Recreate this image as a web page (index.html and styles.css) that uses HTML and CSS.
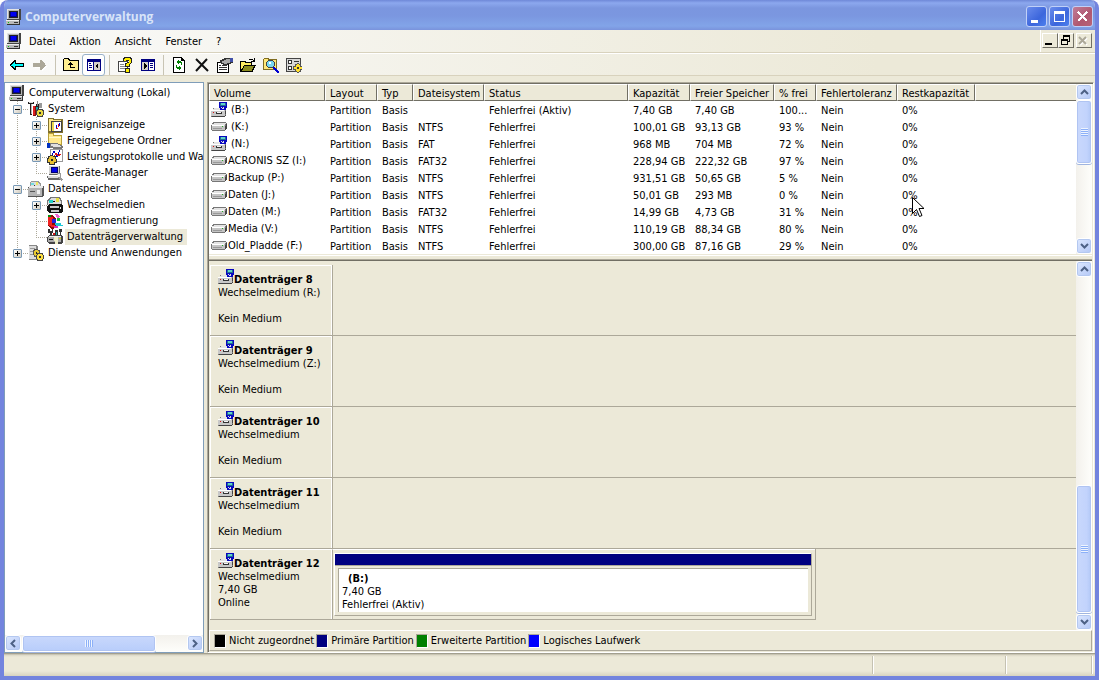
FILE: index.html
```html
<!DOCTYPE html>
<html lang="de">
<head>
<meta charset="utf-8">
<title>Computerverwaltung</title>
<link rel="stylesheet" href="styles.css">
</head>
<body>
<svg class="sprite" aria-hidden="true">
  <symbol id="computer" viewBox="0 0 16 16"><path d="M1 0h13l1 1v10H1z" fill="#444"/><path d="M1 0h12v10H1z" fill="#b4b4b4"/><path d="M1 0h12v1H1zM1 0h1v10H1z" fill="#e4e4e4"/><path d="M3 2h9v7H3z" fill="#222"/><path d="M4 3h7v5H4z" fill="#000090"/><path d="M5 3h5v4H5z" fill="#0000f0"/><path d="M0 11h14v5H1l-1-1z" fill="#333"/><path d="M0 11h13v4H0z" fill="#b8b8b8"/><path d="M0 11h13v1H0z" fill="#eee"/><path d="M8 13h4v1H8z" fill="#333"/><path d="M2 13h1v1H2z" fill="#0c0"/></symbol>
  <symbol id="tools" viewBox="0 0 16 16"><path d="M0 1h6v2H4v11H2V3H0z" fill="#222"/><path d="M1 1h4v1H1z" fill="#ddd"/><path d="M3 3h1v10H3z" fill="#bbb"/><path d="M5 5h3v10H5z" fill="#801010"/><path d="M5 5h2v9H5z" fill="#e02020"/><path d="M8 3h3v11H8z" fill="#222"/><path d="M9 0h1v5H9z" fill="#888"/><path d="M8 6h2v7H8z" fill="#18a0a0"/><path d="M11 2h3v5h-3z" fill="#999"/><path d="M9 8h6v1h1v5h-1v2H9v-2H8V9h1z" fill="#444"/><path d="M10 9h4v1h1v4h-1v1h-4v-1H9v-4h1z" fill="#e8d840"/><path d="M11 11h2v2h-2z" fill="#333"/></symbol>
  <symbol id="events" viewBox="0 0 16 16"><path d="M1 1h6v1h9v14H1z" fill="#80702c"/><path d="M2 2h4v1h8v11H2z" fill="#ffe98c"/><path d="M4 4h11v11H4z" fill="#444"/><path d="M5 5h9v9H5z" fill="#fff"/><path d="M5 5h2v9H5z" fill="#edd94e"/><path d="M9 8h1v3H9zM12 6h1v3h-1z" fill="#0000d0"/><path d="M11 7h1v3h-1zM9 11h2v1H9z" fill="#e01010"/></symbol>
  <symbol id="shared" viewBox="0 0 16 16"><path d="M1 0h6v2h8v10H1z" fill="#b8a038"/><path d="M2 1h4v2h8v8H2z" fill="#ffe98c"/><path d="M2 4h12v1H2z" fill="#fff8c8"/><path d="M0 10h3v5H0z" fill="#0030c0"/><path d="M3 10h7l6 3v2l-3 1H8l-5-1z" fill="#777"/><path d="M4 11h6l4 2v1H7l-3-1z" fill="#e0e0e0"/></symbol>
  <symbol id="perf" viewBox="0 0 16 16"><path d="M3 0h13v13H3z" fill="#999"/><path d="M4 1h11v11H4z" fill="#fff"/><path d="M5 6l2-4 3 6 3-7" stroke="#0000c0" fill="none"/><path d="M6 10l3-6 2 3 3-2" stroke="#e01010" fill="none"/><path d="M1 7h2V6h3v1h3v3h1v4H8v2H2v-2H0V9h1z" fill="#333"/><path d="M3 7h3v1h2v2h1v3H7v2H3v-2H1v-3h1V8h1z" fill="#e8c030"/><path d="M4 10h2v2H4z" fill="#222"/></symbol>
  <symbol id="device" viewBox="0 0 16 16"><path d="M2 1h11v9H2z" fill="#666"/><path d="M2 1h10v8H2z" fill="#d0d0d0"/><path d="M4 2h7v6H4z" fill="#000070"/><path d="M5 3h5v4H5z" fill="#0000e8"/><path d="M0 11h13v1l2 3H1z" fill="#666"/><path d="M1 11h11v2H1z" fill="#ddd"/><path d="M10 8h4v4l2 3-2 1-3-4z" fill="#999"/><path d="M11 9h2v3h-2z" fill="#eee"/></symbol>
  <symbol id="storage" viewBox="0 0 16 16"><path d="M3 0h7l3 3v4H2V2z" fill="#999"/><path d="M3 1h6l3 3v3H3z" fill="#ddd"/><path d="M3 2h3v2H3z" fill="#70dce0"/><path d="M8 1h2v3H8z" fill="#f0e860"/><path d="M6 4h1v1H6z" fill="#333"/><path d="M1 5h14l1 1v8l-2 2H0V6z" fill="#555"/><path d="M0 7h14v8H0z" fill="#b4b4b4"/><path d="M1 5h14v2H1z" fill="#e8e8e8"/><path d="M2 10h5v1H2z" fill="#555"/><path d="M9 9h3v4H9z" fill="#eee"/></symbol>
  <symbol id="removable" viewBox="0 0 16 16"><path d="M3 0h10l2 4v4H0V3z" fill="#777"/><path d="M4 1h8l2 4v3H1V4z" fill="#ddd"/><path d="M2 3h4v3H2z" fill="#20d0c8"/><path d="M9 1h3v4H9z" fill="#e8e040"/><path d="M6 4h2v1H6z" fill="#111"/><path d="M2 7h12l2 2v5l-2 2H2l-2-2V9z" fill="#111"/><path d="M3 9h9v2H3zM4 13h8v2H4z" fill="#c8c8c8"/><path d="M13 10h1v2h-1z" fill="#eee"/></symbol>
  <symbol id="defrag" viewBox="0 0 16 16"><path d="M1 4l4-2 4 3v10l-4 1-4-3z" fill="#8c0808"/><path d="M1 4h5v2H5v6h3v2H5l-4-2z" fill="#f02020"/><path d="M1 2h3v2H1z" fill="#0a8a0a"/><path d="M5 6h4v4H5z" fill="#2020d8"/><path d="M8 1h3l2 3-3 1z" fill="#f060d0"/><path d="M10 5h3v3h-3z" fill="#18c030"/><path d="M8 10h6v2h2v1h-7z" fill="#20c8d8"/><path d="M7 13h4v2H7z" fill="#d030c0"/></symbol>
  <symbol id="diskmgmt" viewBox="0 0 16 16"><path d="M1 0h2v2h2V0h1v4H5v4H3V4H1zM8 1h3v7H8zM12 0h3v3h-1v5h-1V3h-1z" fill="#333"/><path d="M9 3h1v5H9z" fill="#20b0b0"/><path d="M6 4h2v4H6z" fill="#d01818"/><path d="M0 8l2-2h12l2 2v5l-2 2H2l-2-2z" fill="#444"/><path d="M1 8h13v5H1z" fill="#aaa"/><path d="M2 7h12v1H2z" fill="#eee"/><path d="M2 10h4v1H2z" fill="#111"/><path d="M7 8h4v7H8z" fill="#eeeec8"/><path d="M12 9h2v1h-2z" fill="#dd0"/></symbol>
  <symbol id="services" viewBox="0 0 16 16"><path d="M1 0h7l2 2v13H1z" fill="#888"/><path d="M1 1h7v13H1z" fill="#dcdcdc"/><path d="M2 3h5v1H2zM2 6h5v1H2zM2 9h5v1H2z" fill="#999"/><path d="M6 4h4v1h2v5h-2v2H6v-2H5V5h1z" fill="#555"/><path d="M7 5h3v1h1v4h-1v1H7v-1H6V6h1z" fill="#e8c830"/><path d="M8 7h1v2H8z" fill="#222"/><path d="M9 8h6v2h1v4h-1v2H9v-2H8v-4h1z" fill="#444"/><path d="M10 9h4v1h1v4h-1v1h-4v-1H9v-4h1z" fill="#ffe040"/><path d="M11 11h2v2h-2z" fill="#333"/></symbol>
  <symbol id="drive" viewBox="0 0 16 10"><path d="M2 0h13v1h1v6h-1v1h-1v1H1V8H0V3h1V1h1z" fill="#777"/><path d="M3 1h12v1h-1v1H1V2h2z" fill="#e4e4e4"/><path d="M1 3h13v5H1z" fill="#c4c4c4"/><path d="M1 3h12v1H1z" fill="#fff"/><path d="M2 6h9v1H2z" fill="#999"/><path d="M11 4h1v1h-1z" fill="#2a2"/><path d="M15 2h1v5h-1v1h-1V4h1z" fill="#444"/></symbol>
  <symbol id="stick" viewBox="0 0 16 15"><path d="M2 6h13v7h-1v2H0V8h2z" fill="#777"/><path d="M3 6h10v1h1v1H2V7h1z" fill="#e4e4e4"/><path d="M0 8h14v6H0z" fill="#c8c8c8"/><path d="M0 8h13v1H0z" fill="#fff"/><path d="M5 10h6v2H5z" fill="#333"/><path d="M6 10h4v1H6z" fill="#f4f4f4"/><path d="M2 10h1v1H2z" fill="#e01010"/><path d="M14 9h1v4h-1v1H1v1h13v-1h1z" fill="#444"/><path d="M8 0h8v6h-1v2H9V6H8z" fill="#0808c0"/><path d="M9 1h6v3H9z" fill="#207090"/><path d="M10 1h4v2h-4z" fill="#60d0c8"/><path d="M10 5h1v1h-1zM12 5h1v1h-1zM11 6h2v1h-2z" fill="#ddd"/></symbol>
  <symbol id="back" viewBox="0 0 16 16"><path d="M1 7h1V6h1V5h1V4h1V3h2v3h8v4H7v3H5v-1H4v-1H3v-1H2V9H1z" fill="#000"/><path d="M2 8h1V7h1V6h1V5h1v2h8v2H6v2H5v-1H4V9H2z" fill="#0ff"/></symbol>
  <symbol id="forward" viewBox="0 0 16 16"><path d="M15 9h-1V8h-1V7h-1V6h-1V5H9v3H3v3h7v3h1v-1h1v-1h1v-1h1v-1h1z" fill="#fff"/><path d="M14 8h-1V6h-1V5h-1V4h-1V3H8v3H1v4h7v3h2v-1h1v-1h1v-1h1V9h1z" fill="#aca899"/></symbol>
  <symbol id="folderup" viewBox="0 0 16 16"><path d="M1 1h5v1h1v1h9v11H0V2h1z" fill="#000"/><path d="M1 2h4v1h1v1h9v9H1z" fill="#ffee90"/><path d="M7 5h1v1h1v1h1v1H8v2h4v1H7V8H5V7h1V6h1z" fill="#000"/></symbol>
  <symbol id="treepane" viewBox="0 0 16 16"><path d="M1 2h14v12H1z" fill="#000080"/><path d="M2 5h5v8H2z" fill="#fff"/><path d="M8 5h6v8H8z" fill="#d4d0c8"/><path d="M3 6h2v1H3zM3 8h3v1H3zM3 10h3v1H3z" fill="#000080"/><path d="M9 9l3-3v6z" fill="#000"/></symbol>
  <symbol id="actionpane" viewBox="0 0 16 16"><path d="M1 2h14v12H1z" fill="#000080"/><path d="M2 5h6v8H2z" fill="#d4d0c8"/><path d="M9 5h5v8H9z" fill="#fff"/><path d="M10 6h3v1h-3zM10 8h3v1h-3zM10 10h3v1h-3z" fill="#000080"/><path d="M7 9L4 6v6z" fill="#000"/></symbol>
  <symbol id="helpdoc" viewBox="0 0 16 16"><path d="M1 4h10v11H1z" fill="#444"/><path d="M2 5h8v9H2z" fill="#fff"/><path d="M3 7h4v1H3zM3 9h5v1H3zM3 11h5v1H3z" fill="#888"/><path d="M6 1h1V0h7v1h1v5h-1v1h-1v3H8V6h2V5h2V4H6z" fill="#222"/><path d="M7 2h1V1h5v1h1v4h-1v1h-1v2H9V7h1V6h2V3H9v1H7z" fill="#fe0"/><path d="M8 11h5v5H8z" fill="#222"/><path d="M9 12h3v3H9z" fill="#fe0"/></symbol>
  <symbol id="refresh" viewBox="0 0 16 16"><path d="M2 0h9v1h1v1h1v1h1v13H2z" fill="#000"/><path d="M3 1h7v3h3v11H3z" fill="#fff"/><path d="M5 5h1V4h1V3h1v1h2v1h1v3h-1V6H8v1H7V6H6V5zM11 11h-1v1H9v1H8v-1H6v-1H5V8h1v2h2V9h1v1h1v1h1z" fill="#008000"/></symbol>
  <symbol id="delete" viewBox="0 0 16 16"><path d="M2 2l12 12M13 2L2 14" stroke="#111" stroke-width="2"/></symbol>
  <symbol id="props" viewBox="0 0 16 16"><path d="M0 5h12v11H0z" fill="#000"/><path d="M1 6h10v9H1z" fill="#fff"/><path d="M2 8h2v1H2zM5 8h5v1H5zM2 10h8v1H2zM2 12h8v1H2z" fill="#333"/><path d="M3 3h2V2h2V1h9v5h-2v1h-3v1H6V7H4V6H3z" fill="#333"/><path d="M5 4h2V3h2V2h4v4h-3v1H7V6H5z" fill="#a8a8a8"/><path d="M13 1h3v4h-3z" fill="#4050a8"/></symbol>
  <symbol id="open" viewBox="0 0 16 16"><path d="M0 4h6v1h6v3h4v1h-1v2h-1v2h-1v2H0z" fill="#000"/><path d="M1 5h4v1h6v2H4v1H3v2H2v1H1z" fill="#ffec60"/><path d="M4 9h10v1h-1v2h-1v2H2v-1h1v-2h1z" fill="#8c8c20"/><path d="M9 2h4v1h1V1h1v4h-4V4h2V3H9z" fill="#000"/></symbol>
  <symbol id="search" viewBox="0 0 16 16"><path d="M1 1h5v1h8v11H0V2h1z" fill="#806c20"/><path d="M1 2h4v1h8v9H1z" fill="#ffe878"/><path d="M5 3h5v1h1v1h1v4h-1v1h-1v1H5v-1H4V9H3V5h1V4h1z" fill="#444"/><path d="M5 4h5v1h1v4h-1v1H5V9H4V5h1z" fill="#78d8f0"/><path d="M6 5h2v2H6z" fill="#fff"/><path d="M10 10h2v1h1v1h1v1h1v1h1v2h-2v-1h-1v-1h-1v-1h-1v-1h-1z" fill="#0000d0"/></symbol>
  <symbol id="settings" viewBox="0 0 16 16"><path d="M0 1h15v14H0z" fill="#444"/><path d="M1 2h13v12H1z" fill="#d8d8d8"/><path d="M2 3h4v4H2zM8 4h5v1H8zM2 9h4v4H2z" fill="#333"/><path d="M3 4h2v2H3zM3 10h2v2H3z" fill="#fff"/><path d="M9 7h2V6h2v1h2v2h1v4h-1v2h-2v1h-2v-1H9v-2H7V9h2z" fill="#555"/><path d="M10 8h1V7h2v1h1v2h2v2h-2v2h-1v1h-2v-1h-1v-2H8v-2h2z" fill="#ffe030"/><path d="M11 10h2v2h-2z" fill="#333"/></symbol>
  <symbol id="up" viewBox="0 0 9 6"><path d="M1 5l3.500-3.500L8 5" fill="none" stroke="#4d6185" stroke-width="2"/></symbol>
  <symbol id="down" viewBox="0 0 9 6"><path d="M1 1l3.500 3.500L8 1" fill="none" stroke="#4d6185" stroke-width="2"/></symbol>
  <symbol id="left" viewBox="0 0 6 9"><path d="M5 1L1.500 4.500 5 8" fill="none" stroke="#4d6185" stroke-width="2"/></symbol>
  <symbol id="right" viewBox="0 0 6 9"><path d="M1 1l3.500 3.500L1 8" fill="none" stroke="#4d6185" stroke-width="2"/></symbol>
</svg>

<div class="window">
  <header class="titlebar">
    <svg class="icon"><use href="#computer"/></svg>
    <h1 class="title">Computerverwaltung</h1>
    <div class="caption-buttons">
      <button class="caption" aria-label="Minimieren"><svg viewBox="0 0 19 19"><path d="M4 13h7v3H4z" fill="#fff"/></svg></button>
      <button class="caption" aria-label="Maximieren"><svg viewBox="0 0 19 19"><path d="M4 4h11v11H4zM5 7v7h9V7z" fill="#fff" fill-rule="evenodd"/></svg></button>
      <button class="caption close" aria-label="Schließen"><svg viewBox="0 0 19 19"><path d="M5 5l9 9M14 5l-9 9" stroke="#fff" stroke-width="2"/></svg></button>
    </div>
  </header>

  <div class="menubar">
    <svg class="icon"><use href="#computer"/></svg>
    <nav class="menus">
      <button class="menu">Datei</button>
      <button class="menu">Aktion</button>
      <button class="menu">Ansicht</button>
      <button class="menu">Fenster</button>
      <button class="menu">?</button>
    </nav>
    <div class="child-buttons">
      <button class="child" aria-label="Fenster minimieren"><svg viewBox="0 0 12 11"><path d="M2 8h7v2H2z"/></svg></button>
      <button class="child" aria-label="Fenster wiederherstellen"><svg viewBox="0 0 12 11"><path d="M4 0h7v7H9v3H2V4h2zM5 2v2h4v2h1V2zM3 6v3h5V6z" fill-rule="evenodd"/></svg></button>
      <button class="child apart" aria-label="Fenster schließen" disabled><svg class="smooth" viewBox="0 0 12 11"><path d="M3 3l7 7M10 3l-7 7" stroke="#fff" stroke-width="2"/><path d="M2 2l7 7M9 2L2 9" stroke="#aca899" stroke-width="2"/></svg></button>
    </div>
  </div>

  <div class="toolbar" role="toolbar" aria-label="Symbolleiste">
    <button class="tool" aria-label="Zurück"><svg class="icon"><use href="#back"/></svg></button>
    <button class="tool" aria-label="Vorwärts"><svg class="icon"><use href="#forward"/></svg></button>
    <span class="tool-sep"></span>
    <button class="tool" aria-label="Aufwärts"><svg class="icon"><use href="#folderup"/></svg></button>
    <button class="tool pressed" aria-label="Struktur" aria-pressed="true"><svg class="icon"><use href="#treepane"/></svg></button>
    <span class="tool-sep"></span>
    <button class="tool" aria-label="Hilfe"><svg class="icon"><use href="#helpdoc"/></svg></button>
    <button class="tool" aria-label="Ansicht"><svg class="icon"><use href="#actionpane"/></svg></button>
    <span class="tool-sep"></span>
    <button class="tool" aria-label="Aktualisieren"><svg class="icon"><use href="#refresh"/></svg></button>
    <button class="tool" aria-label="Löschen"><svg class="icon smooth"><use href="#delete"/></svg></button>
    <button class="tool" aria-label="Eigenschaften"><svg class="icon"><use href="#props"/></svg></button>
    <button class="tool" aria-label="Öffnen"><svg class="icon"><use href="#open"/></svg></button>
    <button class="tool" aria-label="Durchsuchen"><svg class="icon"><use href="#search"/></svg></button>
    <button class="tool" aria-label="Einstellungen"><svg class="icon"><use href="#settings"/></svg></button>
  </div>

  <main class="content">
    <nav class="tree-pane" aria-label="Konsolenstruktur">
      <ul class="tree">
        <li class="node"><svg class="icon"><use href="#computer"/></svg><span class="label">Computerverwaltung (Lokal)</span></li>
        <li class="node"><span class="line tee"><button class="expander" aria-label="Reduzieren"></button></span><svg class="icon"><use href="#tools"/></svg><span class="label">System</span></li>
        <li class="node"><span class="line"></span><span class="line tee"><button class="expander plus" aria-label="Erweitern"></button></span><svg class="icon"><use href="#events"/></svg><span class="label">Ereignisanzeige</span></li>
        <li class="node"><span class="line"></span><span class="line tee"><button class="expander plus" aria-label="Erweitern"></button></span><svg class="icon"><use href="#shared"/></svg><span class="label">Freigegebene Ordner</span></li>
        <li class="node"><span class="line"></span><span class="line tee"><button class="expander plus" aria-label="Erweitern"></button></span><svg class="icon"><use href="#perf"/></svg><span class="label">Leistungsprotokolle und War</span></li>
        <li class="node"><span class="line"></span><span class="line end"></span><svg class="icon"><use href="#device"/></svg><span class="label">Geräte-Manager</span></li>
        <li class="node"><span class="line tee"><button class="expander" aria-label="Reduzieren"></button></span><svg class="icon"><use href="#storage"/></svg><span class="label">Datenspeicher</span></li>
        <li class="node"><span class="line"></span><span class="line tee"><button class="expander plus" aria-label="Erweitern"></button></span><svg class="icon"><use href="#removable"/></svg><span class="label">Wechselmedien</span></li>
        <li class="node"><span class="line"></span><span class="line tee"></span><svg class="icon"><use href="#defrag"/></svg><span class="label">Defragmentierung</span></li>
        <li class="node"><span class="line"></span><span class="line end"></span><svg class="icon"><use href="#diskmgmt"/></svg><span class="label selected">Datenträgerverwaltung</span></li>
        <li class="node"><span class="line end"><button class="expander plus" aria-label="Erweitern"></button></span><svg class="icon"><use href="#services"/></svg><span class="label">Dienste und Anwendungen</span></li>
      </ul>
      <div class="scroll horizontal">
        <button class="scroll-btn" aria-label="Nach links"><svg class="arrow-h"><use href="#left"/></svg></button>
        <div class="track"><div class="thumb tree-thumb"><span class="grip"></span></div></div>
        <button class="scroll-btn" aria-label="Nach rechts"><svg class="arrow-h"><use href="#right"/></svg></button>
      </div>
    </nav>

    <section class="details">
      <div class="volume-pane">
        <div class="volume-list">
          <table class="volumes">
            <colgroup><col class="c-volume"><col class="c-layout"><col class="c-type"><col class="c-fs"><col class="c-status"><col class="c-size"><col class="c-free"><col class="c-pct"><col class="c-fault"><col class="c-rest"><col></colgroup>
            <thead><tr><th>Volume</th><th>Layout</th><th>Typ</th><th>Dateisystem</th><th>Status</th><th>Kapazität</th><th>Freier Speicher</th><th>% frei</th><th>Fehlertoleranz</th><th>Restkapazität</th><th class="filler"></th></tr></thead>
            <tbody>
              <tr><td><span class="vol spaced"><svg class="stick"><use href="#stick"/></svg>(B:)</span></td><td>Partition</td><td>Basis</td><td></td><td>Fehlerfrei (Aktiv)</td><td>7,40 GB</td><td>7,40 GB</td><td>100...</td><td>Nein</td><td>0%</td><td></td></tr>
              <tr><td><span class="vol spaced"><svg class="drive"><use href="#drive"/></svg>(K:)</span></td><td>Partition</td><td>Basis</td><td>NTFS</td><td>Fehlerfrei</td><td>100,01 GB</td><td>93,13 GB</td><td>93 %</td><td>Nein</td><td>0%</td><td></td></tr>
              <tr><td><span class="vol spaced"><svg class="stick"><use href="#stick"/></svg>(N:)</span></td><td>Partition</td><td>Basis</td><td>FAT</td><td>Fehlerfrei</td><td>968 MB</td><td>704 MB</td><td>72 %</td><td>Nein</td><td>0%</td><td></td></tr>
              <tr><td><span class="vol"><svg class="drive"><use href="#drive"/></svg>ACRONIS SZ (I:)</span></td><td>Partition</td><td>Basis</td><td>FAT32</td><td>Fehlerfrei</td><td>228,94 GB</td><td>222,32 GB</td><td>97 %</td><td>Nein</td><td>0%</td><td></td></tr>
              <tr><td><span class="vol"><svg class="drive"><use href="#drive"/></svg>Backup (P:)</span></td><td>Partition</td><td>Basis</td><td>NTFS</td><td>Fehlerfrei</td><td>931,51 GB</td><td>50,65 GB</td><td>5 %</td><td>Nein</td><td>0%</td><td></td></tr>
              <tr><td><span class="vol"><svg class="drive"><use href="#drive"/></svg>Daten (J:)</span></td><td>Partition</td><td>Basis</td><td>NTFS</td><td>Fehlerfrei</td><td>50,01 GB</td><td>293 MB</td><td>0 %</td><td>Nein</td><td>0%</td><td></td></tr>
              <tr><td><span class="vol"><svg class="drive"><use href="#drive"/></svg>Daten (M:)</span></td><td>Partition</td><td>Basis</td><td>FAT32</td><td>Fehlerfrei</td><td>14,99 GB</td><td>4,73 GB</td><td>31 %</td><td>Nein</td><td>0%</td><td></td></tr>
              <tr><td><span class="vol"><svg class="drive"><use href="#drive"/></svg>Media (V:)</span></td><td>Partition</td><td>Basis</td><td>NTFS</td><td>Fehlerfrei</td><td>110,19 GB</td><td>88,34 GB</td><td>80 %</td><td>Nein</td><td>0%</td><td></td></tr>
              <tr><td><span class="vol"><svg class="drive"><use href="#drive"/></svg>Old_Pladde (F:)</span></td><td>Partition</td><td>Basis</td><td>NTFS</td><td>Fehlerfrei</td><td>300,00 GB</td><td>87,16 GB</td><td>29 %</td><td>Nein</td><td>0%</td><td></td></tr>
            </tbody>
          </table>
        </div>
        <div class="scroll vertical">
          <button class="scroll-btn" aria-label="Nach oben"><svg class="arrow-v"><use href="#up"/></svg></button>
          <div class="track"><div class="thumb volume-thumb"><span class="grip"></span></div></div>
          <button class="scroll-btn" aria-label="Nach unten"><svg class="arrow-v"><use href="#down"/></svg></button>
        </div>
      </div>
      <div class="splitter"></div>
      <div class="disk-pane">
        <div class="disk-list">
          <article class="disk"><div class="disk-info"><h2 class="disk-name"><svg class="stick"><use href="#stick"/></svg>Datenträger 8</h2><p>Wechselmedium (R:)</p><p class="state">Kein Medium</p></div><div class="disk-space"></div></article>
          <article class="disk"><div class="disk-info"><h2 class="disk-name"><svg class="stick"><use href="#stick"/></svg>Datenträger 9</h2><p>Wechselmedium (Z:)</p><p class="state">Kein Medium</p></div><div class="disk-space"></div></article>
          <article class="disk"><div class="disk-info"><h2 class="disk-name"><svg class="stick"><use href="#stick"/></svg>Datenträger 10</h2><p>Wechselmedium</p><p class="state">Kein Medium</p></div><div class="disk-space"></div></article>
          <article class="disk"><div class="disk-info"><h2 class="disk-name"><svg class="stick"><use href="#stick"/></svg>Datenträger 11</h2><p>Wechselmedium</p><p class="state">Kein Medium</p></div><div class="disk-space"></div></article>
          <article class="disk online"><div class="disk-info"><h2 class="disk-name"><svg class="stick"><use href="#stick"/></svg>Datenträger 12</h2><p>Wechselmedium</p><p>7,40 GB</p><p>Online</p></div>
            <div class="disk-space"><div class="partition"><div class="stripe"></div><div class="part-box"><h3 class="part-name">(B:)</h3><p>7,40 GB</p><p>Fehlerfrei (Aktiv)</p></div></div></div></article>
        </div>
        <div class="scroll vertical">
          <button class="scroll-btn" aria-label="Nach oben"><svg class="arrow-v"><use href="#up"/></svg></button>
          <div class="track low"><div class="thumb disk-thumb"><span class="grip"></span></div></div>
          <button class="scroll-btn" aria-label="Nach unten"><svg class="arrow-v"><use href="#down"/></svg></button>
        </div>
      </div>
      <ul class="legend">
        <li class="key"><span class="swatch unallocated"></span>Nicht zugeordnet</li>
        <li class="key"><span class="swatch primary"></span>Primäre Partition</li>
        <li class="key"><span class="swatch extended"></span>Erweiterte Partition</li>
        <li class="key"><span class="swatch logical"></span>Logisches Laufwerk</li>
      </ul>
    </section>
  </main>

  <footer class="statusbar"><span class="cell main-cell"></span><span class="cell mid-cell"></span><span class="cell end-cell"></span></footer>
</div>

<svg class="cursor" viewBox="0 0 12 21" aria-hidden="true"><path d="M.5.500v16l4-4 3 7 2.500-1-3-7h5z" fill="#fff" stroke="#000"/></svg>
</body>
</html>
```

FILE: styles.css
```css
* { box-sizing: border-box; }

body {
  margin: 0;
  background: #fff;
  color: #000;
  font: 11px/13px Tahoma, "DejaVu Sans Condensed", "Noto Sans", sans-serif;
}

h1, h2, h3, p, ul { margin: 0; padding: 0; font-size: inherit; }
ul { list-style: none; }
button { margin: 0; padding: 0; border: 0; background: none; color: inherit; font: inherit; }
svg { display: block; flex: none; shape-rendering: crispEdges; }

.sprite { position: absolute; width: 0; height: 0; }
.icon { width: 16px; height: 16px; }
.smooth { shape-rendering: auto; }
.drive { width: 16px; height: 10px; }
.stick { width: 16px; height: 15px; }

.window {
  display: flex;
  flex-direction: column;
  height: 100vh;
  border: solid #7384de;
  border-width: 0 4px 4px 4px;
  border-radius: 8px 8px 0 0;
  background: #ece9d8;
  overflow: hidden;
}

/* Title bar */
.titlebar {
  display: flex;
  align-items: center;
  gap: 3px;
  flex: none;
  height: 30px;
  padding: 3px 2px 0 2px;
  background: linear-gradient(#6f88d8, #8ca8ee 3px, #7b96df 8px, #7b97e0 16px, #82a4e8 26px, #7a93dc);
}
.title {
  flex: 1;
  color: #d8e4f8;
  font: bold 12px/18px "Trebuchet MS", "Open Sans", sans-serif;
}
.caption-buttons { display: flex; gap: 2px; }
.caption {
  width: 21px;
  height: 21px;
  border: 1px solid #c0d0f8;
  border-radius: 3px;
  background: linear-gradient(135deg, #6a8cec, #3c66dc 60%, #4c80ee);
}
.caption.close { background: linear-gradient(135deg, #c07c98, #b05870 60%, #b86478); }
.caption svg { width: 19px; height: 19px; }

/* Menu bar */
.menubar {
  display: flex;
  align-items: center;
  flex: none;
  height: 23px;
  padding-left: 2px;
  border-bottom: 1px solid #d8d2bd;
  background: linear-gradient(90deg, #fafaf9, #ece9d8 80%);
}
.menus { display: flex; flex: 1; }
.menu { padding: 3px 7px; }
.child-buttons {
  display: flex;
  align-self: stretch;
  align-items: center;
  padding: 0 3px 1px 1px;
  border-left: 1px solid #fff;
}
.child {
  width: 16px;
  height: 15px;
  border: 1px solid;
  border-color: #fff #716f64 #716f64 #fff;
}
.child.apart { margin-left: 2px; }
.child svg { width: 12px; height: 11px; }

/* Toolbar */
.toolbar {
  display: flex;
  align-items: center;
  flex: none;
  height: 23px;
  padding-left: 1px;
  border-top: 1px solid #fff;
  border-bottom: 1px solid #d8d2bd;
  background: linear-gradient(90deg, #fafaf9, #ece9d8 80%);
}
.tool {
  display: flex;
  align-items: center;
  justify-content: center;
  width: 23px;
  height: 22px;
  border-radius: 3px;
}
.tool.pressed { border: 1px solid #98b0c8; background: #fff; }
.tool-sep {
  width: 8px;
  height: 20px;
  background: linear-gradient(#c8c4b4, #c8c4b4) 4px 0 / 1px 100% no-repeat;
}

/* Content */
.content {
  display: flex;
  gap: 3px;
  flex: 1;
  min-height: 0;
  padding-top: 6px;
}
.tree-pane {
  display: flex;
  flex-direction: column;
  flex: none;
  width: 200px;
  border: 1px solid #7f9db9;
  background: #fff;
}
.tree { flex: 1; padding: 2px 0 0 4px; overflow: hidden; }
.node { display: flex; align-items: center; height: 16px; white-space: nowrap; }
.line {
  display: flex;
  align-items: center;
  flex: none;
  width: 19px;
  height: 16px;
  padding-left: 4px;
  background: repeating-linear-gradient(#aca899 0 1px, transparent 1px 2px) 8px 0 / 1px 16px no-repeat;
}
.line.tee {
  background:
    repeating-linear-gradient(#aca899 0 1px, transparent 1px 2px) 8px 0 / 1px 16px no-repeat,
    repeating-linear-gradient(90deg, #aca899 0 1px, transparent 1px 2px) 8px 8px / 11px 1px no-repeat;
}
.line.end {
  background:
    repeating-linear-gradient(#aca899 0 1px, transparent 1px 2px) 8px 0 / 1px 8px no-repeat,
    repeating-linear-gradient(90deg, #aca899 0 1px, transparent 1px 2px) 8px 8px / 11px 1px no-repeat;
}
.expander {
  width: 9px;
  height: 9px;
  border: 1px solid #7898b5;
  border-radius: 1px;
  background: linear-gradient(#000, #000) center / 5px 1px no-repeat, linear-gradient(135deg, #fff, #d0cabc);
}
.expander.plus {
  background:
    linear-gradient(#000, #000) center / 5px 1px no-repeat,
    linear-gradient(#000, #000) center / 1px 5px no-repeat,
    linear-gradient(135deg, #fff, #d0cabc);
}
.label { margin-left: 2px; padding: 1px 2px 2px; }
.label.selected { padding-right: 4px; background: #ece9d8; }

/* Scroll bars */
.scroll { display: flex; flex: none; background: linear-gradient(90deg, #f3f1ec, #fefefb); }
.scroll.vertical { flex-direction: column; width: 16px; }
.scroll.horizontal { height: 17px; background: linear-gradient(#f3f1ec, #fefefb); }
.scroll-btn {
  display: flex;
  align-items: center;
  justify-content: center;
  flex: none;
  width: 16px;
  height: 16px;
  border: 1px solid #fff;
  border-radius: 3px;
  background: linear-gradient(135deg, #dde8ff, #b4c8f6);
  box-shadow: inset 0 0 0 1px #b4c8f0;
}
.arrow-v { width: 9px; height: 6px; shape-rendering: auto; }
.arrow-h { width: 6px; height: 9px; shape-rendering: auto; }
.track { display: flex; flex: 1; min-height: 0; }
.vertical .track { flex-direction: column; }
.track.low { justify-content: flex-end; }
.thumb {
  display: flex;
  align-items: center;
  justify-content: center;
  flex: none;
  border: 1px solid #fff;
  border-radius: 3px;
  background: linear-gradient(90deg, #c9d8fc, #c2d3fc 70%, #b2c8f6);
  box-shadow: inset 0 0 0 1px #b0c4f2, 0 1px 0 #a0b5e0;
}
.horizontal .thumb { background: linear-gradient(#c9d8fc, #b8cdfb); }
.tree-thumb { width: 81%; margin-left: 1px; }
.volume-thumb { height: 64px; }
.disk-thumb { height: 38%; margin-bottom: 1px; }
.grip {
  width: 7px;
  height: 8px;
  background: repeating-linear-gradient(#eef4fe 0 1px, #8cb0f8 1px 2px);
}
.horizontal .grip {
  width: 8px;
  height: 7px;
  background: repeating-linear-gradient(90deg, #eef4fe 0 1px, #8cb0f8 1px 2px);
}

/* Volume list */
.details {
  display: flex;
  flex-direction: column;
  flex: 1;
  min-width: 0;
  margin-right: 1px;
  border: 1px solid;
  border-color: #aca899 #fff #fff #aca899;
  box-shadow: inset 1px 1px 0 #716f64;
  padding: 1px 1px 1px 1px;
}
.volume-pane { display: flex; flex: none; background: #fff; }
.volume-list { flex: 1; min-width: 0; overflow: hidden; }
.volumes { width: 100%; border-collapse: separate; border-spacing: 0; table-layout: fixed; }
.c-volume { width: 116px; }
.c-layout { width: 52px; }
.c-type { width: 36px; }
.c-fs { width: 71px; }
.c-status { width: 144px; }
.c-size { width: 62px; }
.c-free { width: 84px; }
.c-pct { width: 42px; }
.c-fault { width: 81px; }
.c-rest { width: 78px; }
.volumes th, .volumes td { overflow: hidden; text-align: left; white-space: nowrap; }
.volumes th {
  height: 17px;
  padding: 1px 0 0 4px;
  border: 1px solid;
  border-color: #fff #716f64 #716f64 #fff;
  background: #ece9d8;
  font-weight: normal;
}
.volumes th.filler { border-right: 0; }
.volumes td { height: 17px; padding: 1px 0 0 5px; }
.volumes td:first-child { padding: 0 0 0 2px; }
.vol { display: flex; align-items: center; gap: 1px; height: 17px; }
.vol.spaced { gap: 4px; }

.splitter {
  flex: none;
  height: 7px;
  border-top: 1px solid #ece9d8;
  border-bottom: 1px solid #716f64;
  background: #ece9d8;
  box-shadow: inset 0 1px 0 #fff, inset 0 -1px 0 #aca899;
}

/* Disk list */
.disk-pane { display: flex; flex: 1; min-height: 0; }
.disk-list { flex: 1; min-width: 0; padding: 4px 0 0 1px; overflow: hidden; }
.disk { display: flex; min-height: 71px; border-bottom: 1px solid #aca899; }
.disk-info {
  flex: none;
  width: 122px;
  padding: 3px 0 0 7px;
  border: solid #fff;
  border-width: 1px 1px 0 1px;
}
.disk-name { display: flex; align-items: flex-end; height: 17px; font-weight: bold; }
.disk-name .stick { align-self: flex-start; }
.state { margin-top: 13px; }
.disk-space { flex: 1; border-left: 1px solid #aca899; }
.disk.online { width: 70%; border-right: 1px solid #aca899; }
.online .disk-space { padding: 3px 3px 3px 1px; border-top: 1px solid #fff; }
.partition {
  height: 100%;
  border: 1px solid;
  border-color: #fff #aca899 #aca899 #fff;
}
.stripe { height: 12px; border-bottom: 1px solid #aca899; background: #000080; }
.part-box {
  margin: 2px 3px 3px 3px;
  padding: 3px 0 1px 3px;
  border: solid #aca899;
  border-width: 1px 0 0 1px;
  background: #fff;
}
.part-name { padding-left: 6px; font-weight: bold; }

/* Legend */
.legend {
  display: flex;
  align-items: center;
  gap: 2px;
  flex: none;
  height: 21px;
  padding-left: 4px;
  border: 1px solid;
  border-color: #fff #aca899 #aca899 #fff;
}
.key { display: flex; align-items: center; gap: 3px; white-space: nowrap; }
.swatch {
  width: 12px;
  height: 14px;
  border: 1px solid;
  border-color: #aca899 #fff #fff #aca899;
}
.unallocated { background: #000; }
.primary { background: #000080; }
.extended { background: #008000; }
.logical { background: #00f; }

/* Status bar */
.statusbar {
  display: flex;
  flex: none;
  height: 23px;
  padding: 3px 2px 2px 0;
  background: linear-gradient(#8f8c7c, #dcd8c6 2px, #ece9d8 4px, #ece9d8 18px, #d8d4c0);
}
.cell { border-right: 1px solid #fff; box-shadow: inset -1px 0 0 #c5c2b2; }
.main-cell { flex: 1; }
.mid-cell { width: 133px; }
.end-cell { width: 86px; }

/* Mouse pointer floating over the volume list */
.cursor { position: absolute; left: 912px; top: 197px; width: 12px; height: 21px; shape-rendering: auto; }
```
